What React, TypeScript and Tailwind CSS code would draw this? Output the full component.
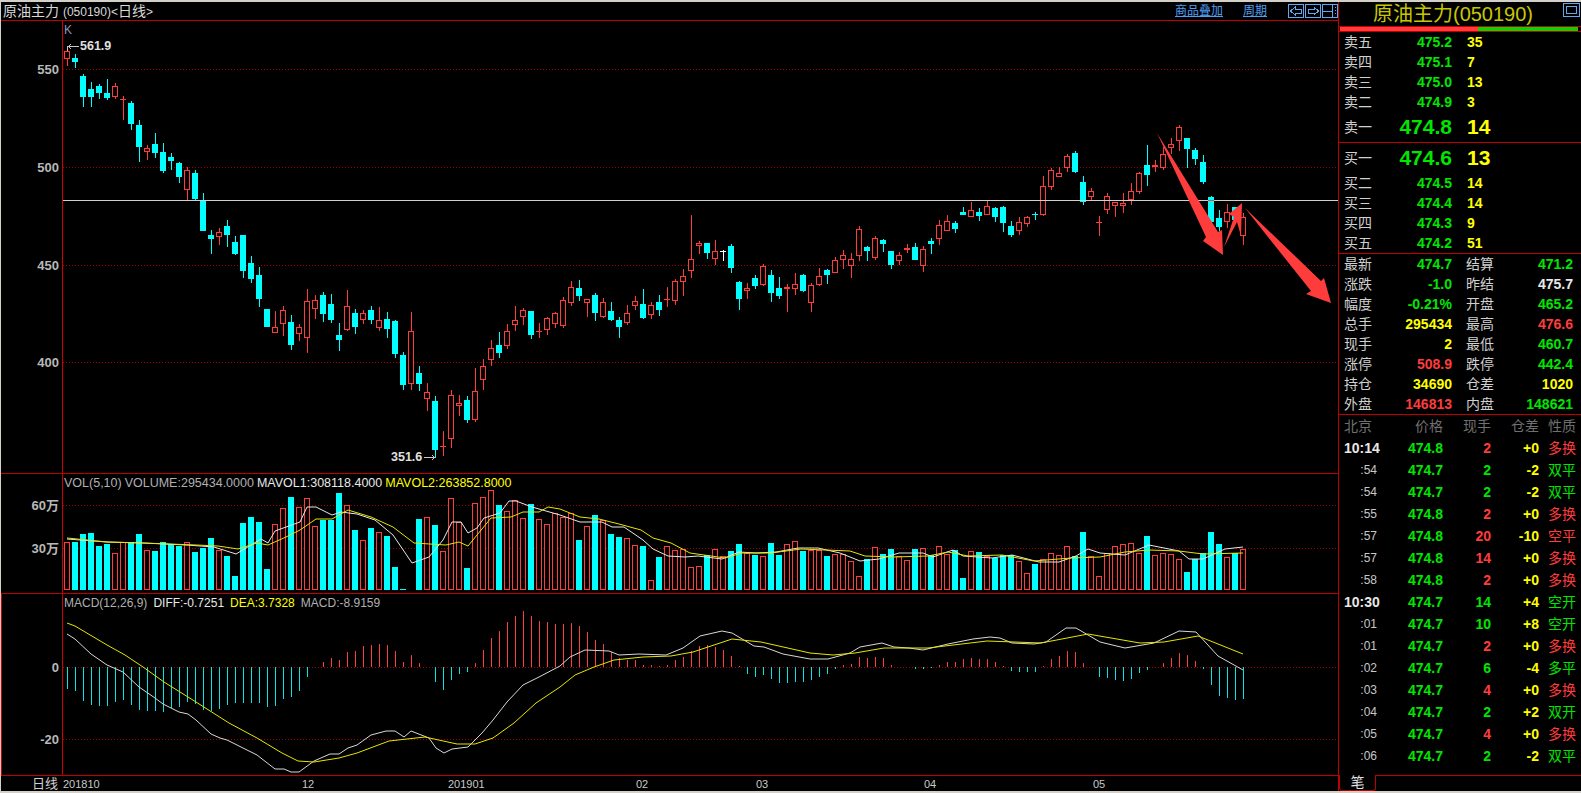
type Candle = [kind: "c" | "r" | "w", top: number, bottom: number, high: number, low: number];

// 日K, one candle every 8px starting at x=67
const candles: Candle[] = [
  ["r", 51, 59, 46, 66], ["c", 58, 62, 54, 68], ["c", 76, 97, 74, 107], ["c", 89, 97, 82, 107],
  ["c", 86, 93, 84, 99], ["c", 93, 98, 79, 100], ["r", 86, 97, 83, 99], ["r", 99, 100, 96, 120],
  ["c", 103, 124, 101, 130], ["c", 125, 147, 120, 162], ["r", 148, 152, 145, 160], ["c", 144, 153, 133, 158],
  ["c", 152, 171, 143, 173], ["c", 157, 161, 153, 170], ["c", 163, 177, 162, 183], ["r", 170, 190, 167, 200],
  ["c", 173, 199, 170, 200], ["c", 201, 231, 193, 231], ["c", 235, 239, 230, 254], ["r", 232, 237, 228, 245],
  ["c", 226, 235, 220, 247], ["c", 242, 254, 236, 255], ["c", 235, 271, 235, 278], ["c", 263, 279, 256, 283],
  ["c", 275, 299, 267, 307], ["c", 309, 327, 309, 327], ["r", 327, 333, 311, 333], ["r", 310, 324, 306, 336],
  ["c", 322, 345, 315, 350], ["r", 327, 334, 324, 341], ["r", 301, 338, 289, 353], ["r", 300, 309, 295, 319],
  ["c", 295, 314, 292, 322], ["c", 304, 320, 294, 323], ["c", 335, 340, 323, 351], ["r", 306, 330, 290, 331],
  ["c", 313, 327, 309, 334], ["r", 313, 320, 310, 324], ["c", 310, 320, 306, 324], ["r", 320, 328, 307, 331],
  ["c", 319, 329, 312, 338], ["c", 321, 354, 320, 358], ["c", 355, 385, 352, 390], ["r", 331, 384, 312, 390],
  ["c", 373, 384, 366, 391], ["r", 392, 399, 383, 411], ["c", 401, 450, 396, 458], ["r", 446, 447, 431, 456],
  ["r", 395, 439, 390, 448], ["r", 403, 406, 395, 416], ["c", 400, 420, 396, 423], ["r", 391, 420, 368, 422],
  ["r", 366, 380, 359, 390], ["r", 348, 360, 340, 366], ["c", 345, 353, 332, 358], ["r", 331, 346, 324, 349],
  ["r", 320, 325, 306, 331], ["r", 310, 317, 308, 325], ["c", 311, 335, 311, 339], ["r", 331, 332, 323, 338],
  ["r", 318, 330, 317, 335], ["r", 313, 324, 312, 328], ["r", 300, 326, 297, 328], ["r", 287, 303, 281, 306],
  ["c", 288, 296, 280, 301], ["r", 299, 303, 299, 317], ["c", 295, 313, 293, 321], ["r", 302, 317, 298, 318],
  ["c", 311, 320, 302, 321], ["c", 320, 327, 317, 338], ["r", 313, 323, 305, 325], ["r", 301, 306, 296, 310],
  ["c", 304, 318, 289, 319], ["r", 305, 315, 302, 319], ["c", 302, 310, 295, 316], ["r", 299, 300, 287, 307],
  ["r", 281, 301, 279, 305], ["r", 276, 282, 269, 296], ["r", 259, 271, 215, 278], ["r", 243, 246, 241, 254],
  ["c", 243, 253, 243, 259], ["r", 251, 259, 240, 265], ["w", 251, 252, 250, 261], ["c", 246, 268, 244, 273],
  ["c", 282, 299, 281, 310], ["r", 288, 291, 283, 299], ["c", 278, 286, 275, 289], ["r", 266, 285, 264, 286],
  ["c", 275, 293, 270, 302], ["c", 288, 296, 277, 299], ["r", 287, 289, 284, 312], ["r", 284, 289, 273, 295],
  ["c", 275, 291, 274, 292], ["r", 285, 303, 283, 312], ["r", 276, 285, 268, 286], ["c", 270, 275, 269, 284],
  ["r", 260, 273, 257, 273], ["r", 255, 260, 250, 269], ["r", 259, 266, 253, 278], ["r", 229, 256, 226, 261],
  ["c", 247, 251, 246, 261], ["r", 238, 258, 236, 260], ["c", 240, 244, 239, 252], ["c", 251, 265, 251, 269],
  ["r", 255, 261, 252, 265], ["r", 248, 250, 244, 253], ["c", 247, 260, 243, 260], ["r", 249, 266, 246, 272],
  ["c", 241, 244, 238, 254], ["r", 225, 239, 220, 245], ["r", 221, 231, 215, 231], ["c", 223, 229, 221, 233],
  ["c", 212, 215, 207, 215], ["r", 210, 217, 202, 217], ["c", 212, 216, 208, 221], ["r", 206, 215, 201, 215],
  ["c", 208, 217, 207, 222], ["c", 207, 223, 206, 232], ["c", 226, 235, 221, 237], ["r", 222, 231, 217, 235],
  ["r", 217, 224, 216, 227], ["c", 214, 215, 212, 220], ["r", 186, 215, 176, 216], ["r", 170, 187, 168, 190],
  ["r", 173, 177, 167, 177], ["r", 156, 168, 154, 172], ["c", 153, 172, 151, 173], ["c", 182, 202, 176, 205],
  ["r", 191, 197, 188, 200], ["r", 222, 223, 216, 236], ["r", 196, 210, 193, 214], ["r", 202, 206, 202, 217],
  ["r", 203, 206, 193, 213], ["r", 191, 200, 183, 205], ["r", 173, 192, 172, 194], ["c", 165, 175, 145, 186],
  ["r", 165, 167, 160, 172], ["r", 154, 168, 147, 170], ["r", 144, 148, 138, 154], ["r", 127, 141, 125, 151],
  ["c", 138, 149, 138, 168], ["c", 150, 159, 148, 165], ["c", 162, 182, 155, 184], ["c", 197, 222, 196, 225],
  ["c", 218, 227, 210, 231], ["r", 212, 222, 204, 228], ["c", 207, 220, 207, 222], ["r", 217, 236, 213, 245],
];

const volumeTops = [
  542, 542, 534, 533, 546, 544, 553, 542, 542, 534, 550, 551, 542, 544, 546, 542, 552, 548, 538, 550,
  556, 576, 523, 517, 522, 569, 524, 508, 497, 507, 498, 526, 520, 520, 493, 505, 530, 540, 528, 532,
  536, 567, 589, 589, 519, 517, 525, 551, 498, 522, 568, 503, 497, 490, 505, 511, 500, 518, 504, 519,
  524, 513, 517, 513, 540, 526, 515, 520, 534, 537, 538, 545, 546, 580, 557, 546, 550, 549, 567, 566,
  555, 549, 556, 551, 544, 553, 555, 556, 543, 555, 544, 541, 551, 550, 550, 556, 554, 554, 561, 576,
  559, 547, 554, 549, 556, 560, 549, 548, 555, 546, 554, 550, 578, 551, 552, 556, 558, 555, 555, 561,
  573, 564, 559, 553, 555, 546, 556, 532, 556, 576, 553, 546, 544, 543, 553, 536, 555, 553, 554, 559,
  572, 559, 553, 532, 544, 557, 553, 549,
];

// px above (+) or below (-) the zero line
const macdBars = [
  -22, -24, -34, -38, -39, -39, -35, -33, -38, -43, -44, -44, -45, -41, -40, -35, -37, -43, -44, -42,
  -38, -36, -36, -36, -36, -40, -39, -32, -30, -24, -10, 0, 5, 9, 7, 15, 16, 21, 22, 23,
  22, 16, 5, 12, 4, 0, -15, -23, -13, -7, -5, 4, 17, 29, 36, 45, 51, 56, 51, 46,
  45, 43, 43, 44, 41, 35, 27, 23, 15, 9, 7, 7, 2, 2, 1, 2, 7, 10, 16, 21,
  22, 20, 17, 11, 1, -7, -10, -8, -12, -16, -16, -15, -15, -13, -10, -7, -2, 2, 3, 10,
  9, 10, 9, 2, 0, 0, -2, -2, -1, 2, 5, 5, 8, 9, 8, 8, 5, 1, -4, -5,
  -5, -5, 1, 8, 11, 16, 15, 4, 0, -10, -11, -13, -14, -12, -6, -3, 0, 4, 9, 14,
  12, 6, -2, -18, -29, -31, -33, -32,
];

const mavol1 =
  "67,539 107,542 143,543 186,545 214,547 236,554 261,539 268,543 275,531 300,522 307,507 316,507 332,515 341,512 357,514 375,520 393,535 412,563 429,557 443,540 452,522 461,522 468,533 477,528 484,518 500,513 509,501 516,501 532,507 560,515 580,522 602,522 612,527 624,527 643,540 653,549 668,556 685,557 698,556 722,559 739,552 756,553 776,552 798,548 818,548 840,553 860,561 879,559 899,553 923,553 933,557 953,550 963,556 992,558 1012,555 1039,562 1059,562 1076,556 1088,549 1100,553 1125,555 1149,545 1179,551 1189,559 1203,559 1225,549 1243,547";
const mavol2 =
  "67,538 107,542 143,543 196,545 218,546 238,549 257,543 268,545 286,537 300,530 316,519 332,519 348,510 371,517 393,527 414,543 446,545 459,542 468,546 491,518 511,517 523,512 539,512 548,507 560,509 580,517 599,519 619,524 641,530 653,538 671,543 690,553 725,558 742,553 771,553 801,549 850,551 865,556 894,557 928,556 948,552 968,556 1002,555 1034,561 1071,558 1100,557 1125,552 1149,550 1179,551 1203,554 1243,553";
const diffLine =
  "67,634 75,639 91,654 107,665 123,672 139,687 155,698 163,704 171,708 179,712 188,714 196,720 211,734 220,738 227,740 243,748 257,755 275,769 284,769 291,772 299,772 314,761 330,754 339,754 348,748 357,745 371,735 386,731 395,731 404,737 411,731 429,738 436,748 444,753 452,749 468,747 482,733 493,720 507,702 523,685 539,677 560,666 570,657 585,650 609,651 619,655 639,654 666,655 683,648 700,636 722,631 732,633 754,646 764,647 783,654 810,659 828,659 850,653 860,647 882,643 894,647 909,648 923,650 948,644 973,639 990,637 1000,638 1012,643 1034,644 1046,642 1066,628 1076,628 1100,642 1125,648 1154,643 1179,631 1196,632 1218,656 1243,670";
const deaLine =
  "67,623 75,626 107,645 125,655 143,667 164,682 196,702 229,723 257,738 282,753 298,761 314,762 339,758 357,753 389,741 425,737 457,744 475,744 493,738 514,723 536,703 560,687 575,675 594,667 614,660 643,657 671,656 693,652 732,639 761,642 810,653 833,655 855,653 884,648 928,648 987,641 1041,643 1088,634 1140,643 1164,642 1198,636 1243,654";

const candleX = (i: number) => 67 + 8 * i;

function Dotted({ y }: { y: number }) {
  return <line x1={63} x2={1338} y1={y + 0.5} y2={y + 0.5} stroke="#a00000" strokeDasharray="1 2" />;
}

function CandleMark({ c, x }: { c: Candle; x: number }) {
  const [kind, top, bottom, high, low] = c;
  const color = kind === "c" ? "#00ffff" : kind === "w" ? "#ffffff" : "#ff3c3c";
  const solid = kind !== "r" || bottom - top < 3;
  return (
    <g>
      <rect x={x} y={high} width={1} height={low - high} fill={color} />
      {solid ? (
        <rect x={x - 3} y={top} width={6} height={bottom - top} fill={color} />
      ) : (
        <rect x={x - 2.5} y={top + 0.5} width={5} height={bottom - top - 1} fill="#000" stroke={color} />
      )}
    </g>
  );
}

function PriceChart() {
  return (
    <svg width={1275} height={452} viewBox="63 21 1275 452" className="block" shapeRendering="crispEdges">
      {[69, 167, 265, 362].map((y) => (
        <Dotted key={y} y={y} />
      ))}
      {candles.map((c, i) => (
        <CandleMark key={i} c={c} x={candleX(i)} />
      ))}
      <rect x={63} y={200} width={1275} height={1} fill="#d0d0d0" />
      <rect x={1208} y={200} width={6} height={1} fill="#ff3c3c" />
      <g fill="#ff3c3c" shapeRendering="auto">
        <polygon points="1157,133 1218,232 1222,230 1223,255 1203,241 1206,237" />
        <polygon points="1224,247 1234,217 1229,214 1242,203 1241,236 1237,222" />
        <polygon points="1245,208 1321,281 1324,278 1331,303 1306,294 1311,291" />
      </g>
      <g stroke="#c8c8c8" fill="none">
        <path d="M67.5 46V51M68 46.5H79M68 46.5l3-2M68 46.5l3 2" />
        <path d="M424 457.5H435M435 457.5l-3-2M435 457.5l-3 2" />
      </g>
    </svg>
  );
}

function VolumeChart() {
  return (
    <svg width={1275} height={119} viewBox="63 474 1275 119" className="block">
      <g shapeRendering="crispEdges">
        <Dotted y={505} />
        <Dotted y={548} />
        {volumeTops.map((top, i) =>
          candles[i][0] === "c" ? (
            <rect key={i} x={candleX(i) - 3} y={top} width={6} height={590 - top} fill="#00ffff" />
          ) : (
            <rect key={i} x={candleX(i) - 2.5} y={top + 0.5} width={5} height={589 - top} fill="#000" stroke="#ff3c3c" />
          ),
        )}
      </g>
      <polyline points={mavol1} fill="none" stroke="#e8e8e8" />
      <polyline points={mavol2} fill="none" stroke="#e6e600" />
    </svg>
  );
}

function MacdChart() {
  return (
    <svg width={1275} height={181} viewBox="63 594 1275 181" className="block">
      <g shapeRendering="crispEdges">
        <Dotted y={667} />
        <Dotted y={739} />
        {macdBars.map((v, i) => (
          <rect
            key={i}
            x={candleX(i)}
            y={v > 0 ? 667 - v : 667}
            width={1}
            height={Math.abs(v)}
            fill={v > 0 ? "#ff3c3c" : "#00e6e6"}
          />
        ))}
      </g>
      <polyline points={diffLine} fill="none" stroke="#d8d8d8" />
      <polyline points={deaLine} fill="none" stroke="#e6e600" />
    </svg>
  );
}

function NavIcon({ kind }: { kind: "left" | "right" | "split" }) {
  return (
    <svg width={16} height={14} viewBox="0 0 16 14" className="block" fill="none" stroke="#62a8f0" shapeRendering="crispEdges">
      <rect x={0.5} y={0.5} width={15} height={13} />
      {kind === "left" && <path d="M2.5 7L7 3V5H13V9H7V11Z" />}
      {kind === "right" && <path d="M13.5 7L9 3V5H3V9H9V11Z" />}
      {kind === "split" && <path d="M1 7.5H10M10.5 1V13M13 3.5h1M13 6.5h1M13 9.5h1" />}
    </svg>
  );
}

const GREEN = "text-[#00e600]";
const YELLOW = "text-[#ffff00]";
const RED = "text-[#ff3c3c]";
const WHITE = "text-[#e8e8e8]";

const sells = [
  ["卖五", "475.2", "35"],
  ["卖四", "475.1", "7"],
  ["卖三", "475.0", "13"],
  ["卖二", "474.9", "3"],
];
const buys = [
  ["买二", "474.5", "14"],
  ["买三", "474.4", "14"],
  ["买四", "474.3", "9"],
  ["买五", "474.2", "51"],
];

const stats: [string, string, string, string, string, string][] = [
  ["最新", "474.7", GREEN, "结算", "471.2", GREEN],
  ["涨跌", "-1.0", GREEN, "昨结", "475.7", WHITE],
  ["幅度", "-0.21%", GREEN, "开盘", "465.2", GREEN],
  ["总手", "295434", YELLOW, "最高", "476.6", RED],
  ["现手", "2", YELLOW, "最低", "460.7", GREEN],
  ["涨停", "508.9", RED, "跌停", "442.4", GREEN],
  ["持仓", "34690", YELLOW, "仓差", "1020", YELLOW],
  ["外盘", "146813", RED, "内盘", "148621", GREEN],
];

const ticks: [string, string, string, string, string, string][] = [
  ["10:14", "474.8", "2", RED, "+0", "多换"],
  [":54", "474.7", "2", GREEN, "-2", "双平"],
  [":54", "474.7", "2", GREEN, "-2", "双平"],
  [":55", "474.8", "2", RED, "+0", "多换"],
  [":57", "474.8", "20", RED, "-10", "空平"],
  [":57", "474.8", "14", RED, "+0", "多换"],
  [":58", "474.8", "2", RED, "+0", "多换"],
  ["10:30", "474.7", "14", GREEN, "+4", "空开"],
  [":01", "474.7", "10", GREEN, "+8", "空开"],
  [":01", "474.7", "2", RED, "+0", "多换"],
  [":02", "474.7", "6", GREEN, "-4", "多平"],
  [":03", "474.7", "4", RED, "+0", "多换"],
  [":04", "474.7", "2", GREEN, "+2", "双开"],
  [":05", "474.7", "4", RED, "+0", "多换"],
  [":06", "474.7", "2", GREEN, "-2", "双平"],
];

function QuoteRow({ label, price, qty, big }: { label: string; price: string; qty: string; big?: boolean }) {
  return (
    <div className={`flex items-center pl-[5px] font-bold ${big ? "h-[30px] text-[21px]" : "h-[20px] text-[14px]"}`}>
      <span className="w-[28px] text-[14px] font-normal text-[#d0d0d0]">{label}</span>
      <span className={`w-[80px] text-right ${GREEN}`}>{price}</span>
      <span className={`ml-[15px] ${YELLOW}`}>{qty}</span>
    </div>
  );
}

export default function App() {
  return (
    <div className="flex h-[793px] w-[1581px] overflow-hidden border-t-2 border-b-2 border-l border-[#d4d0c8] bg-black font-['Liberation_Sans','Noto_Sans_CJK_SC',sans-serif] text-[#c8c8c8]">
      <div className="flex w-[1338px] flex-col border-r border-[#c00000]">
        <div className="flex h-[19px] items-center border-b border-[#c00000] pl-[2px] text-[14px] leading-none">
          <span className="text-[#d8d8d8]">
            原油主力 <span className="text-[12px]">(050190)&lt;</span>日线<span className="text-[12px]">&gt;</span>
          </span>
          <a className="ml-auto text-[12px] text-[#4f9ff0] underline">商品叠加</a>
          <a className="ml-[20px] text-[12px] text-[#4f9ff0] underline">周期</a>
          <div className="ml-[21px] flex gap-[1px]">
            <NavIcon kind="left" />
            <NavIcon kind="right" />
            <NavIcon kind="split" />
          </div>
        </div>

        <div className="flex h-[453px] border-b border-[#c00000]">
          <div className="relative w-[62px] border-r border-[#d00000] text-[13px] leading-none font-bold text-[#b8b8b8]">
            <span className="absolute top-[42px] right-[3px]">550</span>
            <span className="absolute top-[140px] right-[3px]">500</span>
            <span className="absolute top-[238px] right-[3px]">450</span>
            <span className="absolute top-[335px] right-[3px]">400</span>
          </div>
          <div className="relative">
            <PriceChart />
            <span className="absolute top-[3px] left-[1px] text-[12px] leading-none text-[#8a9ab8]">K</span>
            <span className="absolute top-[19px] left-[17px] text-[12.5px] leading-none font-bold text-[#e0e0e0]">561.9</span>
            <span className="absolute top-[430px] left-[328px] text-[12.5px] leading-none font-bold text-[#e0e0e0]">351.6</span>
          </div>
        </div>

        <div className="flex h-[120px] border-b border-[#c00000]">
          <div className="relative w-[62px] border-r border-[#d00000] text-[13px] leading-none font-bold text-[#b8b8b8]">
            <span className="absolute top-[25px] right-[3px]">60万</span>
            <span className="absolute top-[68px] right-[3px]">30万</span>
          </div>
          <div className="relative">
            <VolumeChart />
            <div className="absolute top-[2px] left-[1px] flex gap-[3px] text-[12.5px] leading-[14px] whitespace-nowrap">
              <span className="text-[#b0b0b0]">VOL(5,10)</span>
              <span className="text-[#b0b0b0]">VOLUME:295434.0000</span>
              <span className="text-[#e8e8e8]">MAVOL1:308118.4000</span>
              <span className={YELLOW}>MAVOL2:263852.8000</span>
            </div>
          </div>
        </div>

        <div className="flex h-[182px] border-b border-[#c00000]">
          <div className="relative w-[62px] border-r border-l border-[#d00000] text-[13px] leading-none font-bold text-[#b8b8b8]">
            <span className="absolute top-[67px] right-[3px]">0</span>
            <span className="absolute top-[139px] right-[3px]">-20</span>
          </div>
          <div className="relative">
            <MacdChart />
            <div className="absolute top-[2px] left-[1px] flex gap-[6px] text-[12px] leading-[14px] whitespace-nowrap">
              <span className="text-[#b0b0b0]">MACD(12,26,9)</span>
              <span className="text-[#e8e8e8]">DIFF:-0.7251</span>
              <span className={YELLOW}>DEA:3.7328</span>
              <span className="text-[#b0b0b0]">MACD:-8.9159</span>
            </div>
          </div>
        </div>

        <div className="flex flex-1 items-center text-[11px] leading-none text-[#c8c8c8]">
          <span className="w-[62px] pr-[5px] text-right text-[13px] text-[#d0d0d0]">日线</span>
          <div className="relative h-full flex-1">
            <span className="absolute top-[3px] left-[0px]">201810</span>
            <span className="absolute top-[3px] left-[239px]">12</span>
            <span className="absolute top-[3px] left-[385px]">201901</span>
            <span className="absolute top-[3px] left-[573px]">02</span>
            <span className="absolute top-[3px] left-[693px]">03</span>
            <span className="absolute top-[3px] left-[861px]">04</span>
            <span className="absolute top-[3px] left-[1030px]">05</span>
          </div>
        </div>
      </div>

      <div className="flex min-w-0 flex-1 flex-col">
        <div className="relative flex h-[25px] items-center justify-center border-b border-[#c00000]">
          <span className="mr-[14px] text-[20px] leading-none text-[#c8c800]">原油主力(050190)</span>
          <div className="absolute top-[1px] right-[1px] h-[14px] w-[17px] border border-[#62a8f0] p-[2px]">
            <div className="h-full border border-[#62a8f0]" />
          </div>
        </div>
        <div className="flex h-[5px] border-b border-[#c00000] px-[1px]">
          <div className="w-[138px] bg-[#ff3c3c]" />
          <div className="w-[100px] bg-[#00d800]" />
        </div>

        {sells.map(([l, p, q]) => (
          <QuoteRow key={l} label={l} price={p} qty={q} />
        ))}
        <QuoteRow label="卖一" price="474.8" qty="14" big />
        <div className="h-px bg-[#c00000]" />
        <QuoteRow label="买一" price="474.6" qty="13" big />
        {buys.map(([l, p, q]) => (
          <QuoteRow key={l} label={l} price={p} qty={q} />
        ))}
        <div className="h-px bg-[#c00000]" />

        {stats.map(([l1, v1, c1, l2, v2, c2]) => (
          <div key={l1} className="flex h-[20px] items-center pl-[5px] text-[14px] font-bold">
            <span className="w-[28px] font-normal text-[#d0d0d0]">{l1}</span>
            <span className={`w-[80px] text-right ${c1}`}>{v1}</span>
            <span className="ml-[14px] w-[28px] font-normal text-[#d0d0d0]">{l2}</span>
            <span className={`w-[79px] text-right ${c2}`}>{v2}</span>
          </div>
        ))}
        <div className="h-px bg-[#c00000]" />

        <div className="flex h-[22px] items-center pl-[5px] text-[14px] text-[#707070]">
          <span className="w-[33px]">北京</span>
          <span className="w-[66px] text-right">价格</span>
          <span className="w-[48px] text-right">现手</span>
          <span className="w-[48px] text-right">仓差</span>
          <span className="ml-[9px]">性质</span>
        </div>
        {ticks.map(([time, price, qty, color, diff, kind], i) => (
          <div key={i} className="flex h-[22px] items-center pl-[5px] text-[14px] font-bold">
            {time.length > 3 ? (
              <span className="w-[33px] whitespace-nowrap text-[#e8e8e8]">{time}</span>
            ) : (
              <span className="w-[33px] text-right text-[12px] font-normal text-[#c8c8c8]">{time}</span>
            )}
            <span className={`w-[66px] text-right ${GREEN}`}>{price}</span>
            <span className={`w-[48px] text-right ${color}`}>{qty}</span>
            <span className={`w-[48px] text-right ${YELLOW}`}>{diff}</span>
            <span className={`ml-[9px] font-normal ${color}`}>{kind}</span>
          </div>
        ))}

        <div className="mt-auto flex h-[24px]">
          <div className="mt-[8px] w-[37px] rounded-b-[3px] border-r border-b border-l border-[#c00000] text-center text-[14px] leading-[14px] text-[#e0e0e0]">
            笔
          </div>
          <div className="mt-[8px] flex-1 border-t border-[#c00000]" />
        </div>
      </div>
    </div>
  );
}
